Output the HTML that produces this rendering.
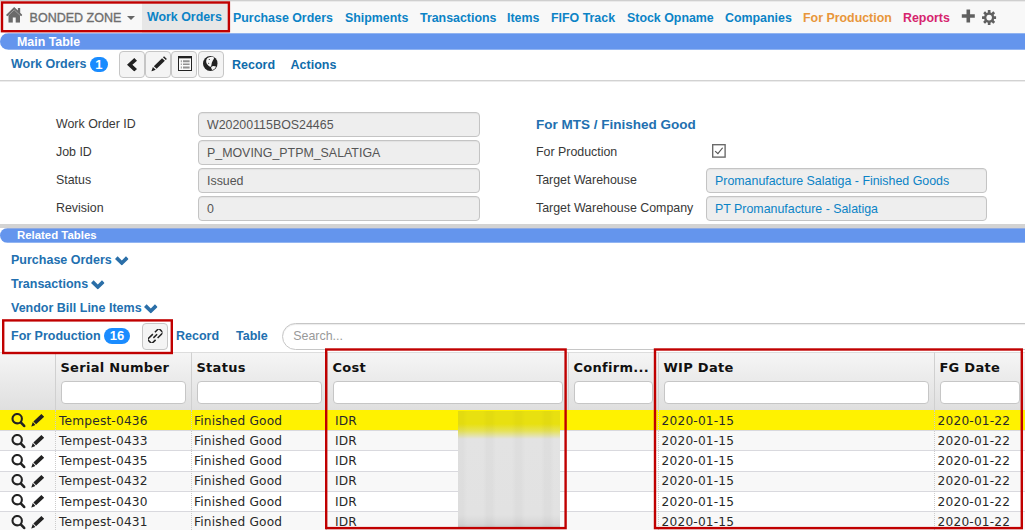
<!DOCTYPE html>
<html><head><meta charset="utf-8">
<style>
*{box-sizing:border-box;margin:0;padding:0}
html,body{width:1025px;height:530px;overflow:hidden;background:#fff}
body{position:relative;font-family:"Liberation Sans",Arial,sans-serif;font-size:13px;color:#333}
.abs{position:absolute}
svg{overflow:visible}
.nav{position:absolute;top:0;left:0;width:1025px;height:33px;background:linear-gradient(#c2c2c2 0,#dcdcdc 1px,#f8f8f8 2px,#f8f8f8 100%)}
.nav span{position:absolute;top:11px;font-weight:bold;font-size:12.4px;color:#0b83c6;white-space:nowrap;line-height:15px}
.bar{position:absolute;left:0;width:1025px;background:#6495ed;color:#fff;font-weight:bold;border-radius:9px 0 0 9px;white-space:nowrap}
.lnk{position:absolute;font-weight:bold;font-size:12.5px;color:#2270b0;white-space:nowrap;line-height:15px}
.badge{position:absolute;background:#1a8cff;color:#fff;font-weight:bold;font-size:12px;border-radius:9px;text-align:center;line-height:15px;height:15px}
.btn{position:absolute;width:26px;height:27px;border:1px solid #c6c6c6;border-radius:4px;background:#f4f4f4}
.lbl{position:absolute;font-size:12.4px;color:#383838;white-space:nowrap;line-height:15px}
.fld{position:absolute;height:25px;border:1px solid #c4c4c4;border-radius:4px;background:#eee;font-size:12.4px;color:#555;line-height:25px;padding-left:8px;white-space:nowrap;box-shadow:inset 0 1px 1px rgba(0,0,0,.05)}
.th{position:absolute;top:352px;height:58px;background:linear-gradient(#f5f5f5,#dfdfdf);border-left:1px solid #d0d0d0;border-top:1px solid #ddd;font-family:"DejaVu Sans",sans-serif;font-weight:bold;font-size:13px;color:#111}
.th b{position:absolute;left:4.4px;top:7px;line-height:16px;white-space:nowrap;letter-spacing:0.3px}
.th i{position:absolute;left:5px;right:5px;top:28px;height:23px;background:#fff;border:1px solid #c6c6c6;border-radius:4px}
.row{position:absolute;left:0;width:1025px;border-bottom:1px solid #d9d9de;font-family:"DejaVu Sans",sans-serif;font-size:12.2px;letter-spacing:0.18px;color:#282828}
.row span{position:absolute;top:3px;line-height:16px;white-space:nowrap}
.red{position:absolute;border:2px solid #c00000}
</style></head><body>
<svg width="0" height="0" style="position:absolute"><defs>
<symbol id="i-search" viewBox="0 0 14.6 14.4" preserveAspectRatio="none"><circle cx="6.2" cy="5.7" r="4.7" fill="none" stroke="currentColor" stroke-width="2.1"/><path d="M10 9.6 L13.4 13.1" stroke="currentColor" stroke-width="2.6" stroke-linecap="round"/></symbol>
<symbol id="i-pencil2" viewBox="0 0 13.2 12.7" preserveAspectRatio="none"><path d="M10.4 0 L13.2 2.8 L5.1 10.3 L2.4 7.4 Z M1.8 8.1 L4.4 10.9 L0.2 12.7 Z" fill="currentColor"/></symbol>
<symbol id="i-pencil" viewBox="0 0 16 16" preserveAspectRatio="none"><path d="M13.0 0.2 L15.8 3.0 L14.7 4.1 L11.9 1.3 Z M11.0 2.2 L13.8 5.0 L5.6 13.2 L2.8 10.4 Z M1.9 11.3 L4.7 14.1 L0.3 15.8 Z" fill="currentColor"/></symbol>
<symbol id="i-chevl" viewBox="0 0 10 13.6" preserveAspectRatio="none"><path d="M7.3 0 L0 6.8 L7.3 13.6 L10 10.9 L5.4 6.8 L10 2.7 Z" fill="currentColor"/></symbol>
<symbol id="i-chevd" viewBox="0 0 14 10" preserveAspectRatio="none"><path d="M0 3 L7 10 L14 3 L11.3 0.3 L7 4.6 L2.7 0.3 Z" fill="currentColor"/></symbol>
<symbol id="i-list" viewBox="0 0 14 15" preserveAspectRatio="none"><path d="M0 0 H14 V15 H0 Z M1 2.4 V14 H13 V2.4 Z" fill="currentColor" fill-rule="evenodd"/><path d="M2.8 4.2 H3.8 V6.2 H2.8 Z M5 4.2 H11.6 V6.2 H5 Z M2.8 7.6 H3.8 V9 H2.8 Z M5 7.6 H11.6 V9 H5 Z M2.8 10.6 H3.8 V12.4 H2.8 Z M5 10.6 H11.6 V12.4 H5 Z" fill="currentColor"/><path d="M1 2.4 H13 V14 H1 Z" fill="#fff" opacity=".5"/></symbol>
<symbol id="i-globe" viewBox="0 0 14 14" preserveAspectRatio="none"><circle cx="7" cy="7" r="7" fill="currentColor"/><path d="M3.2 3.4 C4 1.6 6 0.8 8.6 0.8 C10 0.9 10.8 1.6 10.4 2.6 C9.8 3.6 9 4.6 8.5 6 C8.1 7.4 8.2 8.6 7.4 10 C6.4 10.2 5.4 9.4 4.4 8.2 C3.2 6.8 2.7 5.2 3.2 3.4 Z M7.8 10.2 C8.8 9.2 10.8 9 12.4 9.8 C11.8 11.4 10.6 12.6 8.8 13 C8.2 12.2 7.6 11.2 7.8 10.2 Z" fill="#f6f6f6"/><circle cx="6" cy="3.2" r=".5" fill="currentColor"/><circle cx="5.4" cy="6.8" r=".5" fill="currentColor"/></symbol>
<symbol id="i-home" viewBox="0 0 16.4 15.7" preserveAspectRatio="none"><path d="M8.2 0 L11.9 3.5 V1 H14.2 V5.7 L16.4 7.9 L15.1 9.3 L14 8.3 V15.7 H9.7 V10.6 H6.8 V15.7 H2.5 V8.3 L1.3 9.3 L0 7.9 Z" fill="currentColor"/><path d="M8.2 2.9 L2.5 8.3 M8.2 2.9 L14 8.3" stroke="#f8f8f8" stroke-width=".45" fill="none" opacity=".8"/></symbol>
<symbol id="i-plus" viewBox="0 0 14 14"><path d="M5.2 0.5 H8.8 V5.2 H13.5 V8.8 H8.8 V13.5 H5.2 V8.8 H0.5 V5.2 H5.2 Z" fill="currentColor"/></symbol>
<symbol id="i-cog" viewBox="0 0 14 14" preserveAspectRatio="none"><g fill="currentColor"><circle cx="7" cy="7" r="5"/><g id="tt"><rect x="5.7" y="0" width="2.6" height="14" rx="0.4"/></g><use href="#tt" transform="rotate(45 7 7)"/><use href="#tt" transform="rotate(90 7 7)"/><use href="#tt" transform="rotate(135 7 7)"/></g><circle cx="7" cy="7" r="2.7" fill="#f8f8f8"/></symbol>
<symbol id="i-link" viewBox="0 0 14.5 14" preserveAspectRatio="none"><g fill="none" stroke="currentColor" stroke-width="1.5" transform="translate(7.25 7) rotate(-44)"><path d="M-0.4 -3 H-7.4 Q-7.9 -3 -7.9 -2.5 V2.5 Q-7.9 3 -7.4 3 H-2.4"/><path d="M0.4 3 H7.4 Q7.9 3 7.9 2.5 V-2.5 Q7.9 -3 7.4 -3 H2.4"/><path d="M-2.6 0 H2.6"/></g></symbol>
</defs></svg>
<div class="nav">
<span style="left:29.6px;color:#6e6e6e;font-weight:normal;-webkit-text-stroke:0.35px #6e6e6e;font-size:12.5px">BONDED ZONE</span>
<div class="abs" style="left:142px;top:2px;width:87px;height:31px;background:#e7e7e7"></div>
<span style="left:147px;top:10px">Work Orders</span>
<span style="left:233px">Purchase Orders</span>
<span style="left:345px">Shipments</span>
<span style="left:420px">Transactions</span>
<span style="left:507px">Items</span>
<span style="left:551px">FIFO Track</span>
<span style="left:627px">Stock Opname</span>
<span style="left:725px">Companies</span>
<span style="left:803px;color:#e8963a">For Production</span>
<span style="left:903px;color:#d6246e">Reports</span>
</div>
<svg class="abs" style="left:5.6px;top:7px;color:#6a6a6a" width="16.4" height="15.7" preserveAspectRatio="none"><use href="#i-home"/></svg>
<div class="abs" style="left:127px;top:16px;border:4px solid transparent;border-top-color:#666;border-bottom:0"></div>
<svg class="abs" style="left:960.6px;top:8.6px;color:#606060" width="14.6" height="14" preserveAspectRatio="none"><use href="#i-plus"/></svg>
<svg class="abs" style="left:981.7px;top:9.9px;color:#606060" width="14.3" height="15.1" preserveAspectRatio="none"><use href="#i-cog"/></svg>
<div class="bar" style="top:33px;height:17px;line-height:18px;padding-left:17px;font-size:12.4px;background:linear-gradient(#90b3f0 0,#90b3f0 1px,#6495ed 1px,#6495ed 16px,#92b5f2 16px)">Main Table</div>
<div class="lnk" style="left:11px;top:57px">Work Orders</div>
<div class="badge" style="left:90px;top:57px;width:17.5px;font-size:13px">1</div>
<div class="btn" style="left:119px;top:51px"></div>
<div class="btn" style="left:145px;top:51px"></div>
<div class="btn" style="left:171px;top:51px"></div>
<div class="btn" style="left:197.5px;top:51px"></div>
<svg class="abs" style="left:127px;top:57.6px;color:#222" width="10" height="13.6" preserveAspectRatio="none"><use href="#i-chevl"/></svg>
<svg class="abs" style="left:150.8px;top:55.9px;color:#222" width="16.1" height="15.6" preserveAspectRatio="none"><use href="#i-pencil"/></svg>
<svg class="abs" style="left:178.3px;top:56.1px;color:#222" width="14" height="15" preserveAspectRatio="none"><use href="#i-list"/></svg>
<svg class="abs" style="left:203.4px;top:56.2px;color:#222" width="14.7" height="15" preserveAspectRatio="none"><use href="#i-globe"/></svg>
<div class="lnk" style="left:232px;top:58px;color:#0f6cab">Record</div>
<div class="lnk" style="left:290.6px;top:58px;color:#0f6cab">Actions</div>
<div class="abs" style="left:0;top:80px;width:1025px;height:2px;background:linear-gradient(#d2d2d2 0,#d2d2d2 1px,#ececec 1px,#ececec 2px)"></div>
<div class="lbl" style="left:56px;top:117px">Work Order ID</div>
<div class="lbl" style="left:56px;top:145px">Job ID</div>
<div class="lbl" style="left:56px;top:173px">Status</div>
<div class="lbl" style="left:56px;top:201px">Revision</div>
<div class="fld" style="left:198px;top:112px;width:282px">W20200115BOS24465</div>
<div class="fld" style="left:198px;top:140px;width:282px">P_MOVING_PTPM_SALATIGA</div>
<div class="fld" style="left:198px;top:168px;width:282px">Issued</div>
<div class="fld" style="left:198px;top:196px;width:282px">0</div>
<div class="lnk" style="left:536px;top:117px;font-size:13.5px">For MTS / Finished Good</div>
<div class="lbl" style="left:536px;top:145px">For Production</div>
<div class="lbl" style="left:536px;top:173px">Target Warehouse</div>
<div class="lbl" style="left:536px;top:201px">Target Warehouse Company</div>
<div class="fld" style="left:706px;top:168px;width:281px;color:#0b83c6">Promanufacture Salatiga - Finished Goods</div>
<div class="fld" style="left:706px;top:196px;width:281px;color:#0b83c6">PT Promanufacture - Salatiga</div>
<svg class="abs" style="left:712px;top:143.8px" width="13.8" height="13.8" viewBox="0 0 14 14"><rect x="0.7" y="0.7" width="12.6" height="12.6" fill="#fff" stroke="#6a6a6a" stroke-width="1.4"/><path d="M3.2 7.2 L6 9.8 L10.8 3.8" fill="none" stroke="#555" stroke-width="1.2"/></svg>
<div class="abs" style="left:0;top:224px;width:1025px;height:4px;background:#d3d3d3"></div>
<div class="bar" style="top:228px;height:15px;line-height:15px;padding-left:17px;font-size:11.4px;border-radius:8px 0 0 8px;background:linear-gradient(#90abe2 0,#90abe2 1px,#6495ed 1px,#6495ed 14px,#92b5f2 14px)">Related Tables</div>
<div class="lnk" style="left:11px;top:253px">Purchase Orders</div>
<div class="lnk" style="left:11px;top:277px">Transactions</div>
<div class="lnk" style="left:11px;top:301px">Vendor Bill Line Items</div>
<svg class="abs" style="left:115.2px;top:255.6px;color:#2b6fa8" width="13.6" height="9.6" preserveAspectRatio="none"><use href="#i-chevd"/></svg>
<svg class="abs" style="left:91px;top:279.6px;color:#2b6fa8" width="13.6" height="9.6" preserveAspectRatio="none"><use href="#i-chevd"/></svg>
<svg class="abs" style="left:144px;top:303.6px;color:#2b6fa8" width="13.6" height="9.6" preserveAspectRatio="none"><use href="#i-chevd"/></svg>
<div class="lnk" style="left:11px;top:329px">For Production</div>
<div class="badge" style="left:104px;top:328px;width:26px;height:16px;line-height:16px;font-size:13px">16</div>
<div class="btn" style="left:142px;top:323px"></div>
<svg class="abs" style="left:147.9px;top:328.8px;color:#222" width="14.5" height="14.1" preserveAspectRatio="none"><use href="#i-link"/></svg>
<div class="lnk" style="left:176px;top:329px">Record</div>
<div class="lnk" style="left:236px;top:329px">Table</div>
<div class="abs" style="left:282px;top:323px;width:760px;height:27px;border:1px solid #c6c6c6;border-radius:14px;font-size:12.4px;color:#999;line-height:25px;padding-left:10.3px;box-shadow:inset 0 1px 1px rgba(0,0,0,.08)">Search...</div>
<div class="th" style="left:0;width:55px;border-left:0"></div>
<div class="th" style="left:55px;width:136px"><b>Serial Number</b><i></i></div>
<div class="th" style="left:191px;width:136px"><b>Status</b><i></i></div>
<div class="th" style="left:327px;width:241px"><b>Cost</b><i></i></div>
<div class="th" style="left:568px;width:90px"><b>Confirm...</b><i></i></div>
<div class="th" style="left:658px;width:276px"><b>WIP Date</b><i></i></div>
<div class="th" style="left:934px;width:91px"><b>FG Date</b><i></i></div>
<div class="row" style="top:410px;height:21px;background:#fff200"><svg class="abs" style="left:10.8px;top:3.30px;color:#222" width="14.6" height="14.4"><use href="#i-search"/></svg><svg class="abs" style="left:30.9px;top:4.40px;color:#222" width="13.2" height="12.7"><use href="#i-pencil2"/></svg><span style="left:59px;top:3px">Tempest-0436</span><span style="left:194px;top:3px">Finished Good</span><span style="left:335px;top:3px">IDR</span><span style="left:661.6px;top:3px">2020-01-15</span><span style="left:937.6px;top:3px">2020-01-22</span></div>
<div class="row" style="top:431px;height:20px;background:#f8f8f8"><svg class="abs" style="left:10.8px;top:2.55px;color:#222" width="14.6" height="14.4"><use href="#i-search"/></svg><svg class="abs" style="left:30.9px;top:3.65px;color:#222" width="13.2" height="12.7"><use href="#i-pencil2"/></svg><span style="left:59px;top:2px">Tempest-0433</span><span style="left:194px;top:2px">Finished Good</span><span style="left:335px;top:2px">IDR</span><span style="left:661.6px;top:2px">2020-01-15</span><span style="left:937.6px;top:2px">2020-01-22</span></div>
<div class="row" style="top:451px;height:21px;background:#fff"><svg class="abs" style="left:10.8px;top:2.80px;color:#222" width="14.6" height="14.4"><use href="#i-search"/></svg><svg class="abs" style="left:30.9px;top:3.90px;color:#222" width="13.2" height="12.7"><use href="#i-pencil2"/></svg><span style="left:59px;top:2px">Tempest-0435</span><span style="left:194px;top:2px">Finished Good</span><span style="left:335px;top:2px">IDR</span><span style="left:661.6px;top:2px">2020-01-15</span><span style="left:937.6px;top:2px">2020-01-22</span></div>
<div class="row" style="top:472px;height:20px;background:#f8f8f8"><svg class="abs" style="left:10.8px;top:2.05px;color:#222" width="14.6" height="14.4"><use href="#i-search"/></svg><svg class="abs" style="left:30.9px;top:3.15px;color:#222" width="13.2" height="12.7"><use href="#i-pencil2"/></svg><span style="left:59px;top:1px">Tempest-0432</span><span style="left:194px;top:1px">Finished Good</span><span style="left:335px;top:1px">IDR</span><span style="left:661.6px;top:1px">2020-01-15</span><span style="left:937.6px;top:1px">2020-01-22</span></div>
<div class="row" style="top:492px;height:20px;background:#fff"><svg class="abs" style="left:10.8px;top:2.30px;color:#222" width="14.6" height="14.4"><use href="#i-search"/></svg><svg class="abs" style="left:30.9px;top:3.40px;color:#222" width="13.2" height="12.7"><use href="#i-pencil2"/></svg><span style="left:59px;top:2px">Tempest-0430</span><span style="left:194px;top:2px">Finished Good</span><span style="left:335px;top:2px">IDR</span><span style="left:661.6px;top:2px">2020-01-15</span><span style="left:937.6px;top:2px">2020-01-22</span></div>
<div class="row" style="top:512px;height:20px;background:#f8f8f8"><svg class="abs" style="left:10.8px;top:2.55px;color:#222" width="14.6" height="14.4"><use href="#i-search"/></svg><svg class="abs" style="left:30.9px;top:3.65px;color:#222" width="13.2" height="12.7"><use href="#i-pencil2"/></svg><span style="left:59px;top:2px">Tempest-0431</span><span style="left:194px;top:2px">Finished Good</span><span style="left:335px;top:2px">IDR</span><span style="left:661.6px;top:2px">2020-01-15</span><span style="left:937.6px;top:2px">2020-01-22</span></div>
<div class="abs" style="left:55px;top:410px;width:0;height:120px;border-left:1px dotted #ccc"></div>
<div class="abs" style="left:191px;top:410px;width:0;height:120px;border-left:1px dotted #ccc"></div>
<div class="abs" style="left:326px;top:410px;width:0;height:120px;border-left:1px dotted #ccc"></div>
<div class="abs" style="left:658px;top:410px;width:0;height:120px;border-left:1px dotted #ccc"></div>
<div class="abs" style="left:934px;top:410px;width:0;height:120px;border-left:1px dotted #ccc"></div>
<div class="abs" style="left:458.4px;top:411px;width:101.7px;height:116px;overflow:hidden;background:linear-gradient(#e8e010 0,#e8e010 13px,#e6e258 20px,#e3e3e3 28px,#e2e2e2 104px,#d6d6d6 113px,#cacaca 116px)"><div class="abs" style="left:0;top:0;width:102px;height:116px;background:repeating-linear-gradient(90deg,rgba(0,0,0,.025) 0,rgba(0,0,0,.025) 5px,rgba(0,0,0,0) 9px,rgba(0,0,0,0) 25px,rgba(0,0,0,.025) 29px)"></div></div>
<svg class="abs" style="left:0;top:0" width="1025" height="530"><rect x="2.00" y="2.50" width="226.90" height="28.70" fill="none" stroke="#c00000" stroke-width="2.4"/></svg>
<svg class="abs" style="left:0;top:0" width="1025" height="530"><rect x="3.20" y="320.40" width="168.60" height="32.60" fill="none" stroke="#c00000" stroke-width="2.4"/></svg>
<svg class="abs" style="left:0;top:0" width="1025" height="530"><rect x="326.20" y="349.50" width="239.40" height="178.60" fill="none" stroke="#c00000" stroke-width="2.4"/></svg>
<svg class="abs" style="left:0;top:0" width="1025" height="530"><rect x="655.00" y="349.50" width="366.80" height="178.60" fill="none" stroke="#c00000" stroke-width="2.4"/></svg>
</body></html>
